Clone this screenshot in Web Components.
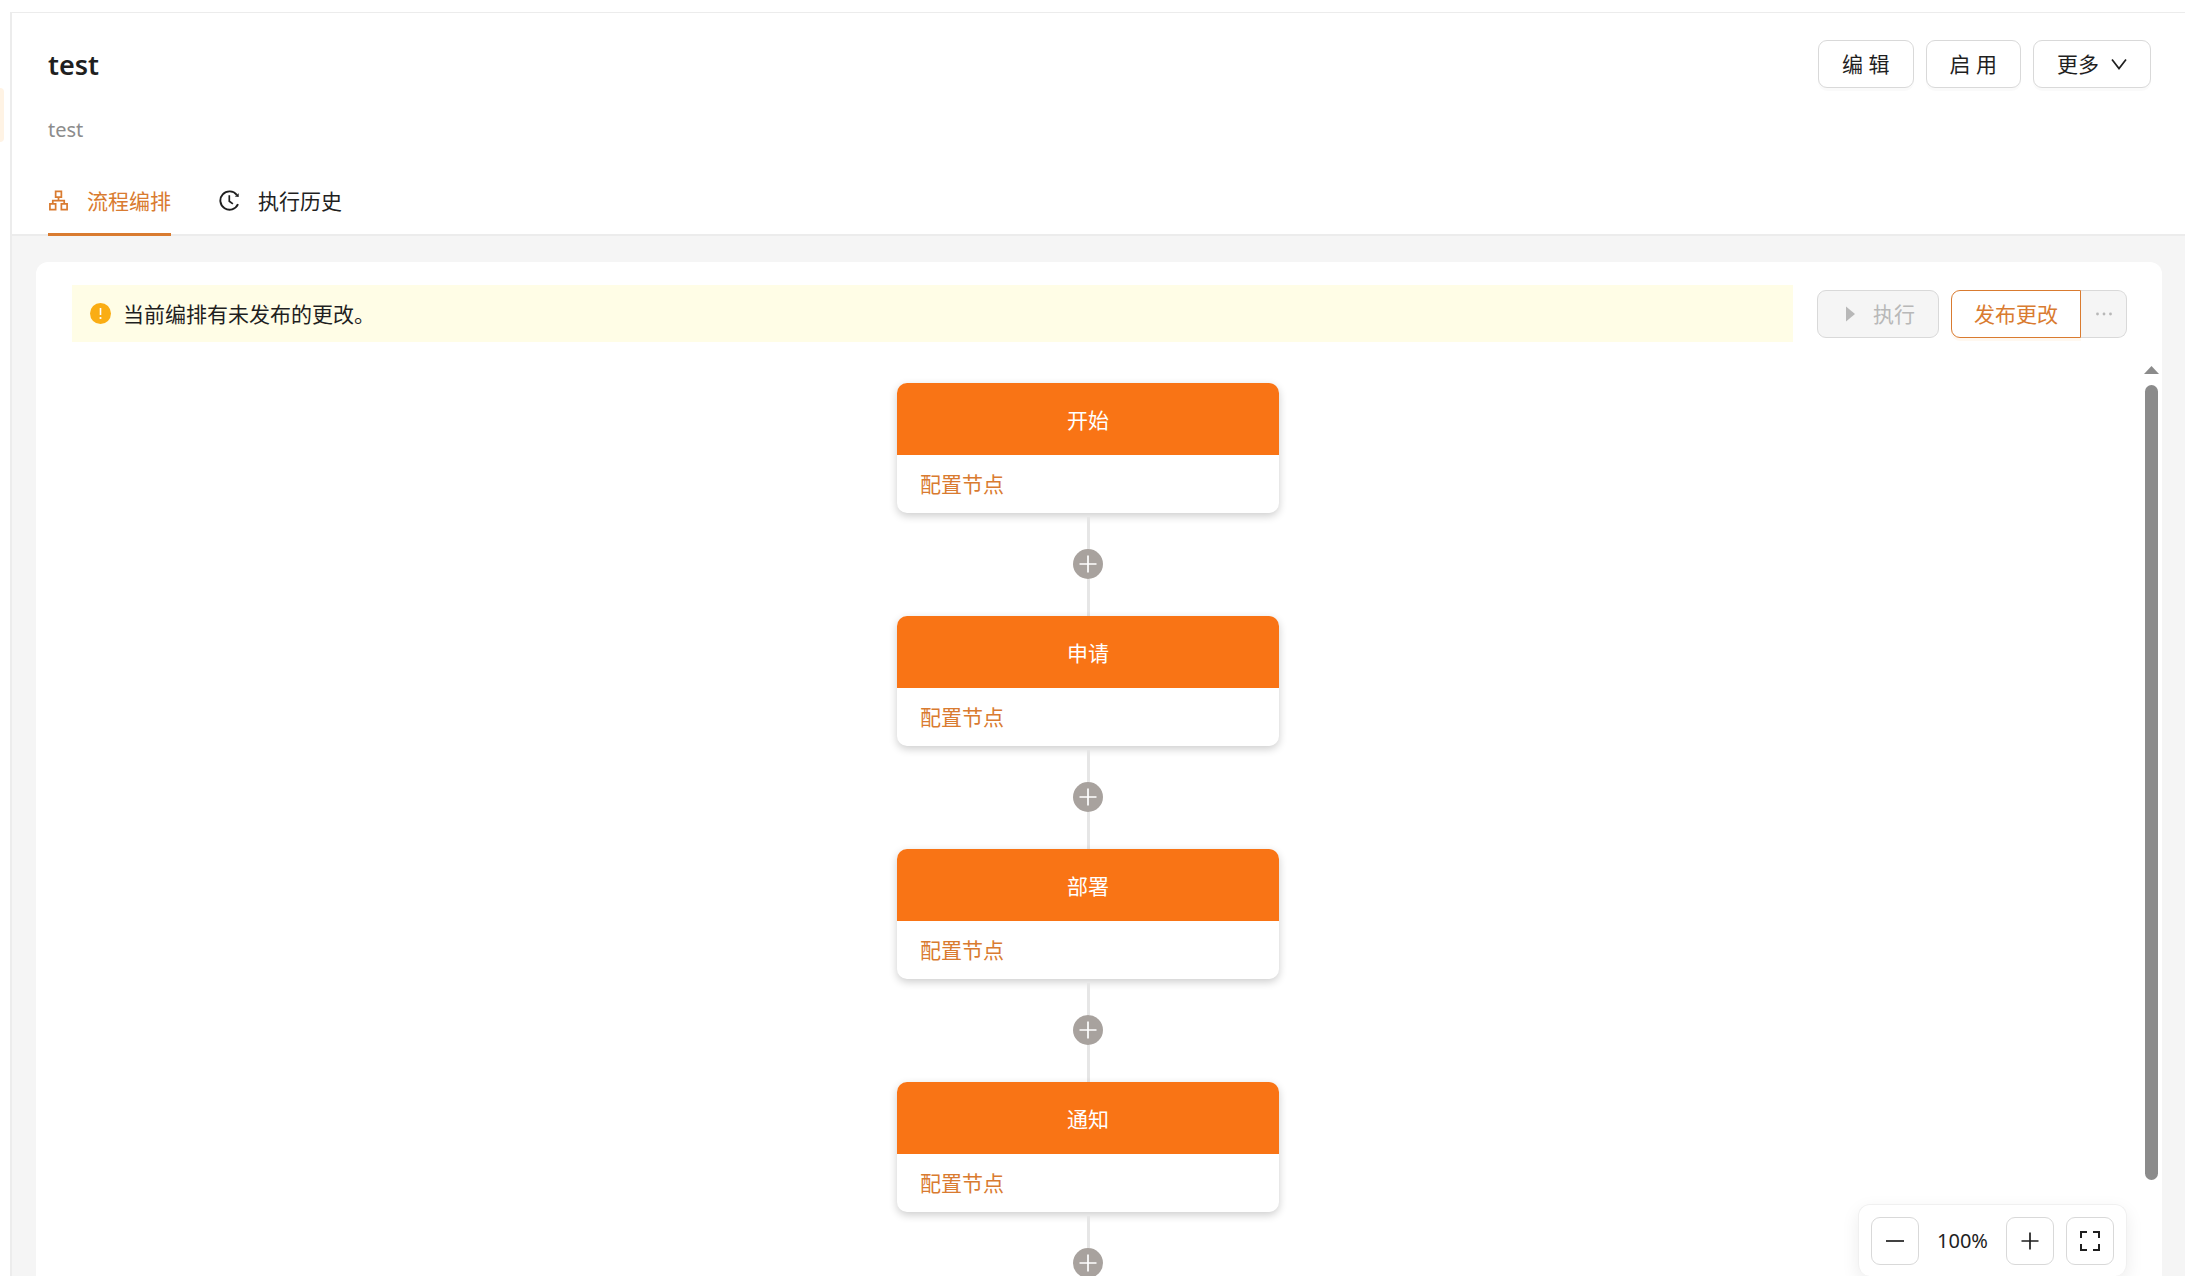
<!DOCTYPE html>
<html lang="zh-CN">
<head>
<meta charset="utf-8">
<title>test</title>
<style>
  html, body { margin: 0; height: 100%; }
  body {
    overflow: hidden;
    background: #fff;
    color: #1f1f1f;
    font: 400 21px/32px "Noto Sans", "Noto Sans CJK SC", sans-serif;
    --primary: #d97b30;
    --node: #f97415;
    --line: #ececec;
    --border: #d9d9d9;
    --muted: #b8b8b8;
    --surface: #f5f5f5;
  }
</style>
</head>
<body>
<flow-page></flow-page>

<script>
const define = (name, html, setup) => {
  const template = document.createElement('template');
  template.innerHTML = html;
  customElements.define(name, class extends HTMLElement {
    constructor() {
      super();
      this.attachShadow({ mode: 'open' }).append(template.content.cloneNode(true));
    }
    connectedCallback() { if (setup) setup(this, this.shadowRoot); }
  });
};

const ICONS = {
  flow: '<svg viewBox="0 0 20 22" fill="none" stroke="currentColor" stroke-width="1.8"><path d="M7 1.500h6v6H7zM1 14.500h6v6H1zM13 14.500h6v6h-6zM10 7.500v3.700M4 14.500v-3.300h12v3.300"/></svg>',
  history: '<svg viewBox="0 0 21 21" fill="none" stroke="currentColor" stroke-width="1.900"><path d="M17.800 4.900A9.200 9.200 0 1 0 19 14.200"/><path d="M10.300 5.200v6l3.600 2.700" stroke-width="1.700"/><path d="M19.700 3.300v3.700l-3.900-.4z" fill="currentColor" stroke="none"/></svg>',
  down: '<svg viewBox="0 0 16 16" fill="none" stroke="currentColor" stroke-width="1.700"><path d="M1 3.500l7 9 7-9"/></svg>',
  play: '<svg viewBox="0 0 20 20" fill="currentColor"><path d="M5 2.500l9 7.500-9 7.500z"/></svg>',
  dots: '<svg viewBox="0 0 18 18" fill="currentColor"><circle cx="2.500" cy="9" r="1.400"/><circle cx="9" cy="9" r="1.400"/><circle cx="15.500" cy="9" r="1.400"/></svg>',
  warning: '<svg viewBox="0 0 21 21"><circle cx="10.500" cy="10.500" r="10.500" fill="#faad14"/><path d="M10.500 5v7" stroke="#fff" stroke-width="1.600"/><circle cx="10.500" cy="15" r="1.100" fill="#fff"/></svg>',
  minus: '<svg viewBox="0 0 20 20" stroke="currentColor" stroke-width="1.700"><path d="M1 10h18"/></svg>',
  plus: '<svg viewBox="0 0 20 20" stroke="currentColor" stroke-width="1.700"><path d="M1.500 10h17M10 1.500v17"/></svg>',
  expand: '<svg viewBox="0 0 22 22" fill="none" stroke="currentColor" stroke-width="2"><path d="M2 8V2h6M14 2h6v6M20 14v6h-6M8 20H2v-6"/></svg>'
};

define('ui-icon', `<style>
  :host { display: inline-flex; flex: none; width: 21px; height: 21px; }
  svg { display: block; width: 100%; height: 100%; }
</style>`, (el, root) => {
  if (!root.querySelector('svg')) root.append(document.createRange().createContextualFragment(ICONS[el.getAttribute('name')]));
});

define('ui-button', `<style>
  :host { display: block; flex: none; }
  button {
    display: flex; align-items: center; justify-content: center; gap: 12px;
    box-sizing: border-box; width: 100%; height: 48px; margin: 0; padding: 0 23px;
    border: 1px solid var(--border); border-radius: 9px; background: #fff;
    color: inherit; font: inherit; white-space: nowrap; cursor: pointer;
    box-shadow: 0 3px 0 rgba(0,0,0,.02);
  }
  :host([disabled]) button { background: var(--surface); color: var(--muted); box-shadow: none; cursor: default; }
  :host([primary]) button { border-color: var(--primary); color: var(--primary); box-shadow: 0 3px 0 rgba(255,165,60,.08); }
  :host([square]) { width: 48px; }
  :host([square]) button { padding: 0; box-shadow: none; }
  :host([part-of="start"]) button { padding: 0 22px; border-radius: 9px 0 0 9px; }
  :host([part-of="end"]) button { border-left: 0; border-radius: 0 9px 9px 0; }
</style><button type="button"><slot></slot></button>`, (el, root) => {
  const button = root.querySelector('button');
  button.disabled = el.hasAttribute('disabled');
  if (el.hasAttribute('label')) button.setAttribute('aria-label', el.getAttribute('label'));
});

define('ui-tab', `<style>
  :host { display: block; }
  a {
    display: flex; align-items: center; gap: 18px; height: 65px;
    border-bottom: 3px solid transparent; color: inherit; text-decoration: none;
  }
  :host([active]) a { color: var(--primary); border-color: var(--primary); }
</style><a href="#"><slot></slot></a>`);

define('page-header', `<style>
  :host {
    display: block; padding: 27px 34px 0 36px; background: #fff;
    border-top: 1px solid var(--line); border-bottom: 2px solid var(--line);
  }
  .top { display: flex; align-items: center; justify-content: space-between; height: 48px; }
  h1 { margin: 0; padding-top: 2px; font-size: 27px; line-height: 36px; font-weight: 600; }
  .actions { display: flex; gap: 12px; }
  p { margin: 24px 0 20px; font-size: 20px; line-height: 36px; color: #8c8c8c; }
  nav { display: flex; gap: 48px; margin-bottom: -2px; }
  .down { width: 16px; height: 16px; }
</style>
<div class="top">
  <h1>test</h1>
  <div class="actions">
    <ui-button>编 辑</ui-button>
    <ui-button>启 用</ui-button>
    <ui-button>更多<ui-icon class="down" name="down"></ui-icon></ui-button>
  </div>
</div>
<p>test</p>
<nav>
  <ui-tab active><ui-icon name="flow"></ui-icon>流程编排</ui-tab>
  <ui-tab><ui-icon name="history"></ui-icon>执行历史</ui-tab>
</nav>`);

define('flow-alert', `<style>
  :host {
    display: flex; align-items: center; gap: 12px; flex: 1; height: 57px;
    box-sizing: border-box; padding: 0 18px; background: #fffde6;
  }
</style><ui-icon name="warning"></ui-icon><span><slot></slot></span>`);

define('flow-node', `<style>
  :host { display: block; width: 382px; border-radius: 10px; background: #fff; box-shadow: 0 3px 8px rgba(0,0,0,.2); }
  header {
    display: flex; align-items: center; justify-content: center; height: 72px; padding-top: 2px;
    box-sizing: border-box; border-radius: 10px 10px 0 0; background: var(--node); color: #fff;
  }
  .body { display: flex; align-items: center; height: 58px; padding: 0 23px; }
  a { color: var(--primary); text-decoration: none; }
</style>
<header><slot></slot></header>
<div class="body"><a href="#">配置节点</a></div>`);

define('flow-link', `<style>
  :host { display: flex; flex-direction: column; align-items: center; height: 99px; padding-top: 4px; }
  i { flex: 1; width: 3px; background: #e6e6e6; }
  i:first-of-type { flex: none; height: 32px; }
  button {
    display: flex; align-items: center; justify-content: center; width: 30px; height: 30px;
    padding: 0; border: 0; border-radius: 50%; background: #a8a29e; color: #fff;
  }
  ui-icon { width: 20px; height: 20px; }
</style><i></i><button type="button" aria-label="添加节点"><ui-icon name="plus"></ui-icon></button><i></i>`);

define('scroll-rail', `<style>
  :host { display: flex; flex-direction: column; align-items: center; width: 22px; flex: none; }
  svg { display: block; width: 15px; height: 8px; margin-bottom: 11px; }
  i { flex: 1; width: 13px; margin-bottom: 96px; border-radius: 7px; background: #8b8b8b; }
</style><svg viewBox="0 0 15 8"><path d="M7.500 0L15 8H0z" fill="#8b8b8b"/></svg><i></i>`);

define('zoom-bar', `<style>
  :host {
    display: flex; align-items: center; gap: 12px; padding: 12px 12px 11px;
    border: 1px solid #f0f0f0; border-bottom: 0; border-radius: 12px; background: #fff;
    box-shadow: 0 6px 18px rgba(0,0,0,.08);
  }
  output { min-width: 63px; font-size: 20px; text-align: center; }
  ui-icon { width: 20px; height: 20px; }
  ui-icon[name="expand"] { width: 22px; height: 22px; }
</style>
<ui-button square label="缩小"><ui-icon name="minus"></ui-icon></ui-button>
<output>100%</output>
<ui-button square label="放大"><ui-icon name="plus"></ui-icon></ui-button>
<ui-button square label="全屏"><ui-icon name="expand"></ui-icon></ui-button>`);

define('flow-editor', `<style>
  :host {
    position: relative; display: flex; flex-direction: column; min-height: 0; overflow: hidden;
    box-sizing: border-box; border-radius: 12px 12px 0 0; background: #fff;
  }
  .bar { display: flex; align-items: center; gap: 24px; padding: 23px 35px 0 36px; }
  .actions { display: flex; gap: 12px; }
  .split { display: flex; }
  .split [part-of="end"] { width: 46px; }
  .play { width: 20px; height: 20px; }
  .dots { width: 18px; height: 18px; }
  .stage { display: flex; flex: 1; min-height: 0; padding-top: 24px; }
  .canvas {
    display: flex; flex: 1; flex-direction: column; align-items: center;
    min-height: 0; overflow: hidden; padding-top: 17px;
  }
  .canvas > * { flex: none; }
  zoom-bar { position: absolute; right: 35px; bottom: 0; }
</style>
<div class="bar">
  <flow-alert>当前编排有未发布的更改。</flow-alert>
  <div class="actions">
    <ui-button disabled><ui-icon class="play" name="play"></ui-icon>执行</ui-button>
    <div class="split">
      <ui-button primary part-of="start">发布更改</ui-button>
      <ui-button disabled square part-of="end" label="更多"><ui-icon class="dots" name="dots"></ui-icon></ui-button>
    </div>
  </div>
</div>
<div class="stage">
  <div class="canvas">
    <flow-node>开始</flow-node><flow-link></flow-link>
    <flow-node>申请</flow-node><flow-link></flow-link>
    <flow-node>部署</flow-node><flow-link></flow-link>
    <flow-node>通知</flow-node><flow-link></flow-link>
  </div>
  <scroll-rail></scroll-rail>
</div>
<zoom-bar></zoom-bar>`);

define('side-edge', `<style>
  :host { display: flex; flex-direction: column; align-items: flex-start; width: 10px; flex: none; padding-top: 76px; }
  i { width: 4px; height: 54px; border-radius: 0 8px 8px 0; background: #fff3e4; }
</style><i></i>`);

define('flow-page', `<style>
  :host { display: flex; height: 100vh; box-sizing: border-box; padding-top: 12px; }
  main {
    display: flex; flex: 1; flex-direction: column; min-width: 0;
    border-left: 2px solid var(--line); background: var(--surface);
  }
  flow-editor { flex: 1; margin: 26px 23px 0 24px; }
</style>
<side-edge></side-edge>
<main>
  <page-header></page-header>
  <flow-editor></flow-editor>
</main>`);
</script>
</body>
</html>
